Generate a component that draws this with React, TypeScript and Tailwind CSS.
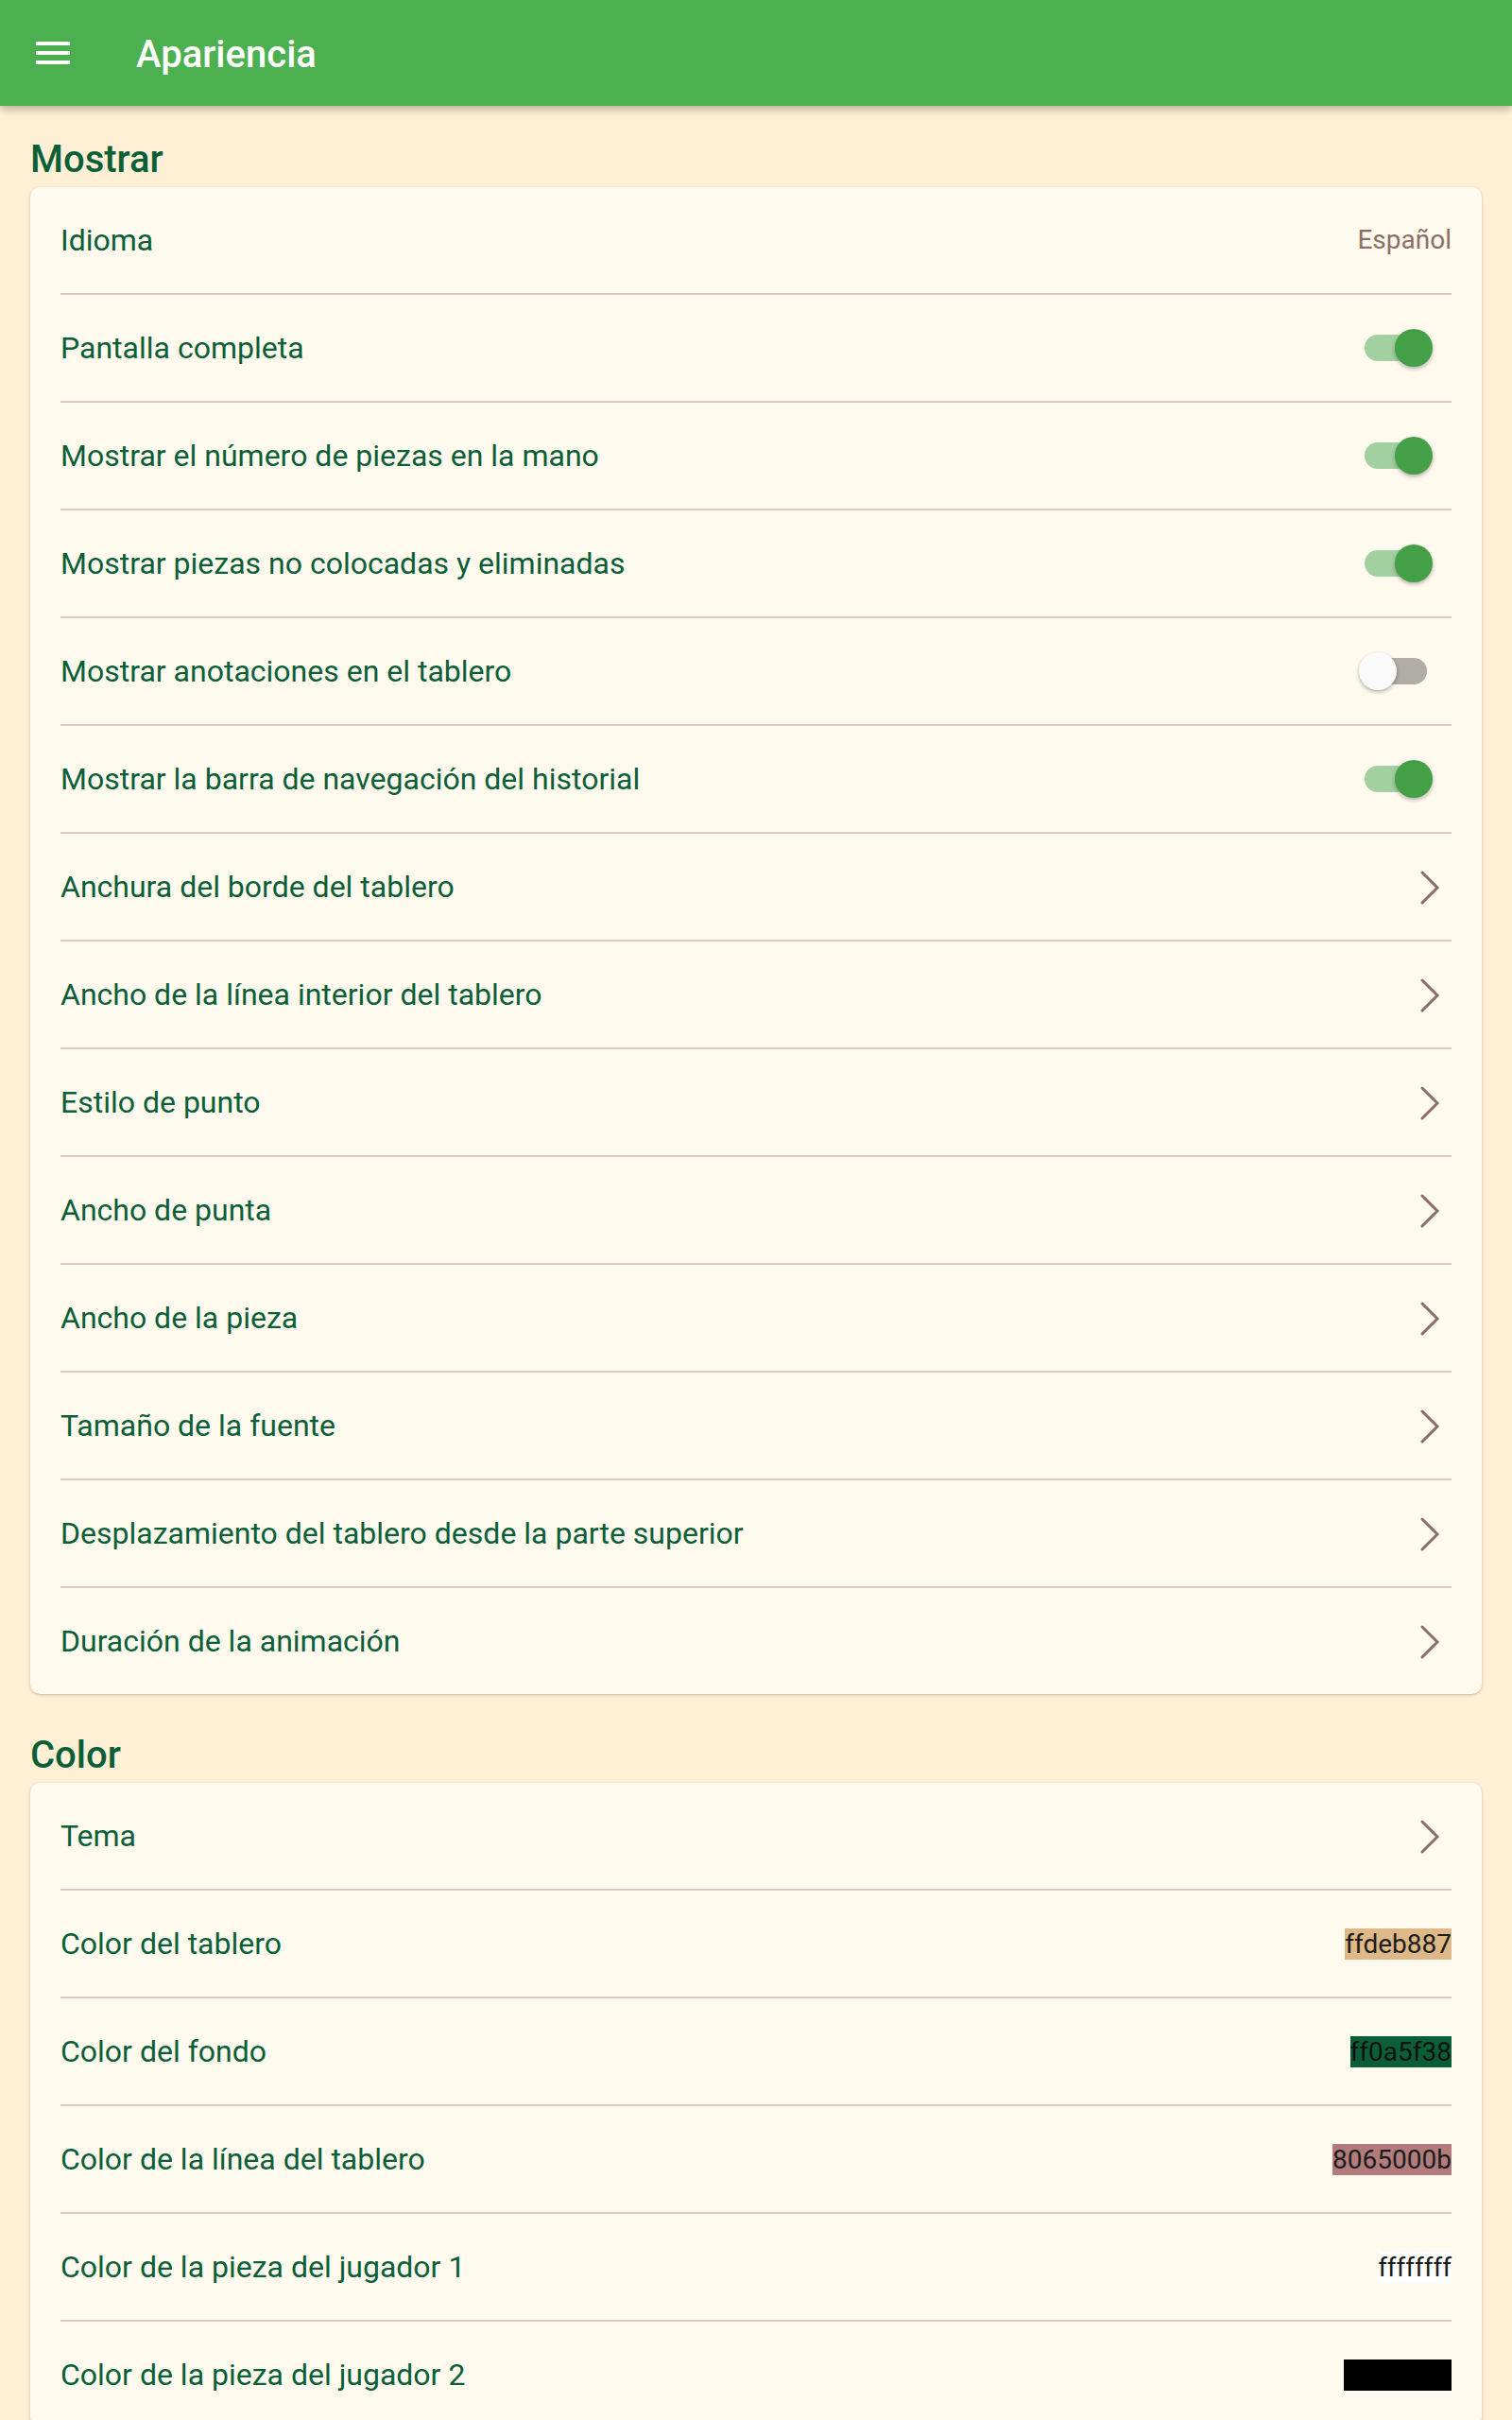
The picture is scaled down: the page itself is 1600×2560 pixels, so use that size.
import type { ReactNode } from "react";

type Row =
  | { label: string; kind: "value"; value: string }
  | { label: string; kind: "switch"; on: boolean }
  | { label: string; kind: "nav" }
  | { label: string; kind: "color"; value: string; swatch: string; ink: string };

const display: Row[] = [
  { label: "Idioma", kind: "value", value: "Español" },
  { label: "Pantalla completa", kind: "switch", on: true },
  { label: "Mostrar el número de piezas en la mano", kind: "switch", on: true },
  { label: "Mostrar piezas no colocadas y eliminadas", kind: "switch", on: true },
  { label: "Mostrar anotaciones en el tablero", kind: "switch", on: false },
  { label: "Mostrar la barra de navegación del historial", kind: "switch", on: true },
  { label: "Anchura del borde del tablero", kind: "nav" },
  { label: "Ancho de la línea interior del tablero", kind: "nav" },
  { label: "Estilo de punto", kind: "nav" },
  { label: "Ancho de punta", kind: "nav" },
  { label: "Ancho de la pieza", kind: "nav" },
  { label: "Tamaño de la fuente", kind: "nav" },
  { label: "Desplazamiento del tablero desde la parte superior", kind: "nav" },
  { label: "Duración de la animación", kind: "nav" },
];

const colors: Row[] = [
  { label: "Tema", kind: "nav" },
  { label: "Color del tablero", kind: "color", value: "ffdeb887", swatch: "bg-[#deb887]", ink: "text-[#1c1c1c]" },
  { label: "Color del fondo", kind: "color", value: "ff0a5f38", swatch: "bg-[#0a5f38]", ink: "text-[#111111]" },
  { label: "Color de la línea del tablero", kind: "color", value: "8065000b", swatch: "bg-[#65000b80]", ink: "text-[#1c1c1c]" },
  { label: "Color de la pieza del jugador 1", kind: "color", value: "ffffffff", swatch: "bg-white", ink: "text-[#1c1c1c]" },
  { label: "Color de la pieza del jugador 2", kind: "color", value: "ff000000", swatch: "bg-black", ink: "text-black" },
];

function Switch({ on }: { on: boolean }) {
  return (
    <div className="relative mr-5 h-10 w-20">
      <div
        className={
          on
            ? "absolute left-2 top-1.5 h-7 w-[68px] rounded-full bg-[#a3d0a0]"
            : "absolute left-2 top-1.5 h-7 w-[66px] rounded-full bg-[#b0aca6]"
        }
      />
      <div
        className={
          on
            ? "absolute left-10 top-0 h-10 w-10 rounded-full bg-[#43a047] shadow-[0_2px_4px_rgba(0,0,0,0.3)]"
            : "absolute left-0.5 top-0 h-10 w-10 rounded-full bg-[#fafafa] shadow-[0_2px_4px_rgba(0,0,0,0.3)]"
        }
      />
    </div>
  );
}

function Chevron() {
  return (
    <svg width="48" height="48" viewBox="0 0 48 48" fill="none">
      <polyline
        points="17,9 33,25 17,41"
        stroke="#8a6d69"
        strokeWidth="3"
        strokeLinecap="round"
        strokeLinejoin="miter"
      />
    </svg>
  );
}

function Trailing({ row }: { row: Row }): ReactNode {
  switch (row.kind) {
    case "value":
      return <span className="text-[28px] text-[#8d6e63]">{row.value}</span>;
    case "switch":
      return <Switch on={row.on} />;
    case "nav":
      return <Chevron />;
    case "color":
      return (
        <span className={`${row.swatch} ${row.ink} text-[28px] leading-[33px]`}>{row.value}</span>
      );
  }
}

function Section({ title, rows }: { title: string; rows: Row[] }) {
  return (
    <section className="mb-2 pt-8">
      <h2 className="mb-1 text-[40px] font-medium leading-[50px] text-[#0a5f38]">{title}</h2>
      <div className="rounded-[10px] bg-[#fff9ee] px-8 shadow-[0_1px_3px_rgba(80,50,20,0.3)]">
        {rows.map((row, index) => (
          <div
            key={row.label}
            className={
              index < rows.length - 1
                ? "flex h-[114px] items-center justify-between border-b-2 border-[#e0c9c1]"
                : "flex h-[112px] items-center justify-between"
            }
          >
            <span className="text-[32px] text-[#0a5f38]">{row.label}</span>
            <Trailing row={row} />
          </div>
        ))}
      </div>
    </section>
  );
}

export default function App() {
  return (
    <div className="min-h-[2560px] bg-[#ffefd5] font-['Roboto',sans-serif]">
      <header className="relative z-10 flex h-[112px] items-center bg-[#4caf50] shadow-[0_4px_8px_rgba(0,0,0,0.25)]">
        <div className="ml-8 flex h-12 w-12 flex-col items-center justify-center gap-1.5">
          <span className="h-1 w-9 bg-white" />
          <span className="h-1 w-9 bg-white" />
          <span className="h-1 w-9 bg-white" />
        </div>
        <h1 className="ml-16 mt-1 text-[40px] font-medium text-white">Apariencia</h1>
      </header>
      <main className="px-8">
        <Section title="Mostrar" rows={display} />
        <Section title="Color" rows={colors} />
      </main>
    </div>
  );
}
